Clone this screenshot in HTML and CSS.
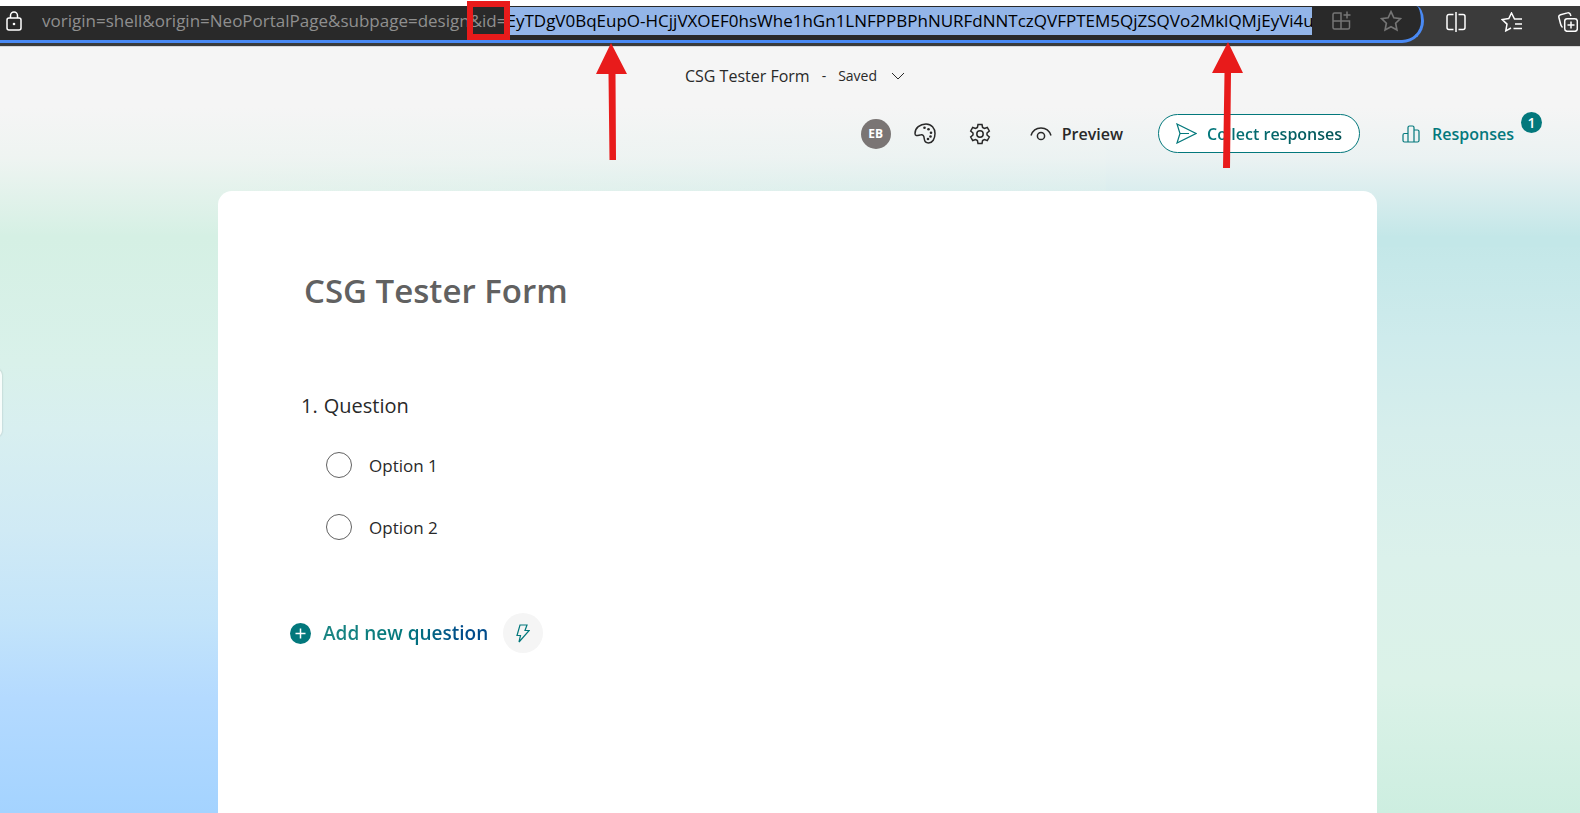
FILE: index.html
```html
<!DOCTYPE html>
<html lang="en">
<head>
<meta charset="utf-8">
<meta name="viewport" content="width=device-width, initial-scale=1">
<title>CSG Tester Form</title>
<link rel="stylesheet" href="styles.css">
</head>
<body>
<div class="browser-bar">
  <div class="address">
    <svg class="lock" viewBox="0 0 16 20" width="16" height="20" aria-hidden="true"><rect x="1" y="7" width="14" height="12" rx="2"/><path d="M4.500 7V4.500a3.500 3.500 0 0 1 7 0V7"/><circle class="dot" cx="8" cy="13" r="1.300"/></svg>
    <input class="url" type="text" aria-label="Address" spellcheck="false" value="vorigin=shell&amp;origin=NeoPortalPage&amp;subpage=design&amp;id=EyTDgV0BqEupO-HCjjVXOEF0hsWhe1hGn1LNFPPBPhNURFdNNTczQVFPTEM5QjZSQVo2MklQMjEyVi4u">
    <button class="bar-button dim" aria-label="App available">
      <svg viewBox="0 0 20 20" width="20" height="20"><path d="M1 10V3.500A1.500 1.500 0 0 1 2.500 2H9v16M1 10h16.500v6.500A1.500 1.500 0 0 1 16 18H2.500A1.500 1.500 0 0 1 1 16.500zM15 0.500v7M11.500 4h7"/></svg>
    </button>
    <button class="bar-button dim" aria-label="Add to favorites">
      <svg viewBox="0 0 20 20" width="22" height="22"><path d="M10 1.500l2.600 5.600 6 .700-4.400 4.200 1.200 6.200L10 15.200l-5.400 3 1.200-6.200L1.400 7.800l6-.700z"/></svg>
    </button>
  </div>
  <div class="bar-tools">
    <button class="bar-button" aria-label="Split screen">
      <svg viewBox="0 0 20 20" width="20" height="20"><path d="M7.500 2.500H3A2 2 0 0 0 1 4.500v11a2 2 0 0 0 2 2h4.500M12.500 2.500H17a2 2 0 0 1 2 2v11a2 2 0 0 1-2 2h-4.500M10 0v20"/></svg>
    </button>
    <button class="bar-button" aria-label="Favorites">
      <svg viewBox="0 0 22 20" width="22" height="20"><path d="M21 7h-7.500L10.500 1 7.800 6.600l-6.600 1 4.800 4.500-1.200 6.700L10 16M14 12h7M12.500 16.500H21"/></svg>
    </button>
    <button class="bar-button" aria-label="Collections">
      <svg viewBox="0 0 20 20" width="20" height="20"><rect x="6.700" y="6.700" width="12.600" height="12.600" rx="2.500"/><path d="M13 9.500v7M9.500 13h7M4.500 15.500C3 14.500 2.800 13 2.200 10.500L.900 5.500A2.300 2.300 0 0 1 2.500 2.700L9.500.900a2.300 2.300 0 0 1 2.900 1.600l.5 1.500"/></svg>
    </button>
  </div>
  <div class="id-box"></div>
</div>

<main class="app">
  <header class="form-header">
    <span class="form-name">CSG Tester Form</span>
    <span class="dash">-</span>
    <span class="saved">Saved</span>
    <button class="plain chevron" aria-label="More form details"><svg viewBox="0 0 14 8" width="14" height="8"><path d="M1 1l6 6 6-6"/></svg></button>
  </header>

  <nav class="toolbar" aria-label="Form tools">
    <span class="avatar">EB</span>
    <button class="plain theme" aria-label="Style">
      <svg viewBox="0 0 22 21" width="22" height="21"><path d="M1 10.500C1 5 6 1 12 1c5.500 0 9 4.200 9 9.500S18.500 20 14.500 20c-3 0-4-1.500-4.300-4.500-.2-2.500-1-4-3.200-3.700C4.500 12 1 14 1 10.500z"/><g class="dots"><circle cx="10.500" cy="4.700" r="1.300"/><circle cx="14.500" cy="6.200" r="1.300"/><circle cx="17" cy="9.700" r="1.300"/><circle cx="16.500" cy="13.500" r="1.300"/><circle cx="14" cy="16" r="1.300"/></g></svg>
    </button>
    <button class="plain settings" aria-label="Settings">
      <svg viewBox="0 0 22 22" width="22" height="22"><path d="M9 1.500h4l.6 3 1.800 1 2.900-1 2 3.500-2.300 2v2l2.300 2-2 3.500-2.900-1-1.800 1-.6 3H9l-.6-3-1.800-1-2.900 1-2-3.500 2.300-2v-2l-2.300-2 2-3.500 2.900 1 1.800-1z"/><circle cx="11" cy="11" r="3.200"/></svg>
    </button>
    <button class="plain preview">
      <svg viewBox="0 0 22 14" width="22" height="14"><path d="M1 8.500C2.500 4 6.500 1 11 1s8.500 3 10 7.500"/><circle cx="11" cy="9" r="3.600"/></svg>
      <span>Preview</span>
    </button>
    <button class="collect">
      <svg viewBox="0 0 21 21" width="21" height="21"><path d="M1 1l19 9.500L1 20l3-9.500zM4 10.500h9"/></svg>
      <span>Collect responses</span>
    </button>
    <button class="plain responses">
      <svg viewBox="0 0 18 18" width="18" height="18"><path d="M6 17V2.500A1.500 1.500 0 0 1 7.500 1h3A1.500 1.500 0 0 1 12 2.500V17M6 8.500H2.500A1.500 1.500 0 0 0 1 10v5.500A1.500 1.500 0 0 0 2.500 17h13a1.500 1.500 0 0 0 1.500-1.500v-9A1.500 1.500 0 0 0 15.500 5H12"/></svg>
      <span>Responses</span>
      <span class="badge">1</span>
    </button>
  </nav>

  <section class="card">
    <h1>CSG Tester Form</h1>
    <fieldset class="question">
      <legend><span>1.</span><span>Question</span></legend>
      <label class="option"><input type="radio" name="q1"><span>Option 1</span></label>
      <label class="option"><input type="radio" name="q1"><span>Option 2</span></label>
    </fieldset>
    <div class="add-row">
      <button class="plain add">
        <svg viewBox="0 0 21 21" width="21" height="21"><circle cx="10.500" cy="10.500" r="10.500"/><path d="M10.500 5.500v10M5.500 10.500h10"/></svg>
        <span>Add new question</span>
      </button>
      <button class="quick" aria-label="Suggested questions">
        <svg viewBox="0 0 14 19" width="14" height="19"><path d="M4 1h7L9 6.500h4.200L3 18l1.500-6.500H1z"/></svg>
      </button>
    </div>
  </section>
  <div class="side-handle"></div>
</main>

<svg class="arrow arrow-left" viewBox="0 0 32 118" width="32" height="118" aria-hidden="true"><path d="M15 0l16 31H19.500L20 117h-6.500L12.500 31H0z"/></svg>
<svg class="arrow arrow-right" viewBox="0 0 32 127" width="32" height="127" aria-hidden="true"><path d="M16 0l15 31H19L18 126h-7L12.500 31H0z"/></svg>
<script src="script.js"></script>
</body>
</html>
```

FILE: styles.css
```css
* { box-sizing: border-box; }

body {
  margin: 0;
  padding-top: 6px;
  min-height: 100vh;
  display: flex;
  flex-direction: column;
  position: relative;
  overflow: hidden;
  background: #fff;
  color: #292929;
  font-family: "Open Sans", "Noto Sans", sans-serif;
  font-size: 17px;
}

svg { display: block; flex: none; fill: none; stroke: currentColor; stroke-width: 1.5; }

button { font: inherit; color: inherit; cursor: pointer; }

.plain, .bar-button {
  display: flex;
  align-items: center;
  padding: 0;
  border: 0;
  background: none;
}

/* Browser bar */
.browser-bar {
  position: relative;
  display: flex;
  height: 41px;
  flex: none;
  background: #3b3b3b;
  border-bottom: 1px solid #d8d8d8;
}

.address {
  flex: 1;
  min-width: 0;
  display: flex;
  align-items: center;
  height: 37px;
  padding: 0 19px 4px 6px;
  background: #292929;
  border: solid #4a8af4;
  border-width: 0 3px 3px 0;
  border-radius: 0 8px 22px 0 / 0 15px 22px 0;
}

.lock { color: #fff; }
.lock .dot { fill: currentColor; stroke: none; }

.url {
  flex: 1;
  min-width: 0;
  height: 28px;
  margin: 0 20px;
  padding: 0;
  border: 0;
  outline: 0;
  background: none;
  color: #8f8f8f;
  font: 17px/28px "Open Sans", "Noto Sans", sans-serif;
}

.url::selection { background: #93b5e8; color: #000; }

.bar-button { color: #fff; }
.bar-button.dim { color: #757575; }
.dim + .dim { margin-left: 28px; }

.bar-tools {
  display: flex;
  align-items: center;
  gap: 35px;
  padding: 0 2px 8px 22px;
}

.id-box {
  position: absolute;
  left: 467px;
  top: -5px;
  width: 43px;
  height: 39px;
  border: 6px solid #e81b1b;
}

/* Page */
.app {
  position: relative;
  flex: 1;
  display: flex;
  flex-direction: column;
  background:
    linear-gradient(#f5f5f5 0, #f5f5f5 60px, rgba(245, 245, 245, .8) 110px, rgba(245, 245, 245, 0) 190px),
    linear-gradient(90deg, transparent 15%, #c3e7e8 86%) 0 0 / 100% 200px no-repeat,
    linear-gradient(#c3e7e8 25%, #ceebec 38%, #d6eeec 50%, #dbf1eb 67%, #dbf2e8 83%, #cdeee0) 100% 0 / 30% 100% no-repeat,
    linear-gradient(#d5f0e4 25%, #d9f1ea 41%, #d8eff0 50%, #d0eaf5 63%, #c3e4fa 75%, #b4daff 85%, #a4d3ff);
}

.form-header {
  display: flex;
  align-items: center;
  justify-content: center;
  padding: 17px 0 0 10px;
  line-height: 24px;
}

.form-name { font-size: 16px; }
.dash { margin: 0 12px; font-size: 14px; }
.saved { font-size: 14px; }
.chevron { margin-left: 14px; }
.chevron svg { stroke-width: 1; }

.toolbar {
  display: flex;
  align-items: center;
  justify-content: flex-end;
  padding: 26px 66px 0 0;
  font-size: 16px;
  font-weight: 600;
}

.avatar {
  width: 30px;
  height: 30px;
  border-radius: 50%;
  background: #7a7574;
  color: #fff;
  font-size: 12px;
  font-weight: 700;
  line-height: 30px;
  text-align: center;
}

.theme { margin-left: 23px; }
.theme .dots { fill: currentColor; stroke: none; }
.settings { margin-left: 33px; }
.preview { margin-left: 39px; gap: 10px; }

.collect {
  display: flex;
  align-items: center;
  gap: 10px;
  height: 39px;
  margin-left: 35px;
  padding: 0 17px;
  border: 1px solid #03787c;
  border-radius: 20px;
  background: #fff;
  color: #03787c;
}

.collect span, .add span {
  background: linear-gradient(90deg, #03787c, #035256);
  background-clip: text;
  color: transparent;
}

.collect svg, .quick svg, .responses svg { stroke-width: 1.2; }

.responses {
  position: relative;
  margin-left: 42px;
  gap: 12px;
  color: #03787c;
}

.badge {
  position: absolute;
  left: 100%;
  bottom: 12px;
  width: 21px;
  height: 21px;
  margin-left: 7px;
  border-radius: 50%;
  background: #03787c;
  color: #fff;
  font-size: 14px;
  line-height: 21px;
  text-align: center;
}

.card {
  flex: 1;
  margin: 38px 12.85% 0 13.8%;
  padding: 76px 86px 40px 70px;
  border-radius: 14px 14px 0 0;
  background: #fff;
}

h1 {
  margin: 0 0 0 16px;
  color: #616161;
  font-size: 33px;
  font-weight: 600;
  line-height: 48px;
}

.question {
  margin: 0;
  padding: 77px 0 0 38px;
  border: 0;
}

.question legend {
  display: flex;
  gap: 6px;
  float: left;
  width: 100%;
  margin-left: -25px;
  padding: 0 0 31px;
  font-size: 20px;
  line-height: 28px;
}

.option {
  clear: both;
  display: flex;
  align-items: center;
  gap: 17px;
  width: max-content;
  height: 28px;
}

.option + .option { margin-top: 34px; }

.option input {
  appearance: none;
  width: 26px;
  height: 26px;
  margin: 0;
  border: 1px solid #616161;
  border-radius: 50%;
}

.add-row {
  display: flex;
  align-items: center;
  gap: 15px;
  margin-top: 72px;
}

.add {
  gap: 12px;
  margin-left: 2px;
  font-size: 19px;
  font-weight: 600;
}

.add circle { fill: #03787c; stroke: none; }
.add path { stroke: #fff; }
.add span { background-image: linear-gradient(90deg, #1b8583, #03787c 50%, #004b8b 85%); }

.quick {
  display: grid;
  place-items: center;
  width: 40px;
  height: 40px;
  padding: 0;
  border: 0;
  border-radius: 50%;
  background: #f5f5f5;
  color: #03787c;
}

.side-handle {
  position: absolute;
  left: -10px;
  top: 322px;
  width: 12px;
  height: 68px;
  border-radius: 6px;
  background: #f7fdfb;
  box-shadow: 0 0 2px rgba(0, 0, 0, .25);
}

/* Callouts */
.arrow {
  position: absolute;
  fill: #e81b1b;
  stroke: none;
}
.arrow-left { left: 596px; top: 43px; }
.arrow-right { left: 1212px; top: 42px; }
```

FILE: script.js
```js
const url = document.querySelector('.url');
url.focus({ preventScroll: true });
url.setSelectionRange(url.value.indexOf('&id=') + 4, url.value.length);
url.scrollLeft = 0;
```
